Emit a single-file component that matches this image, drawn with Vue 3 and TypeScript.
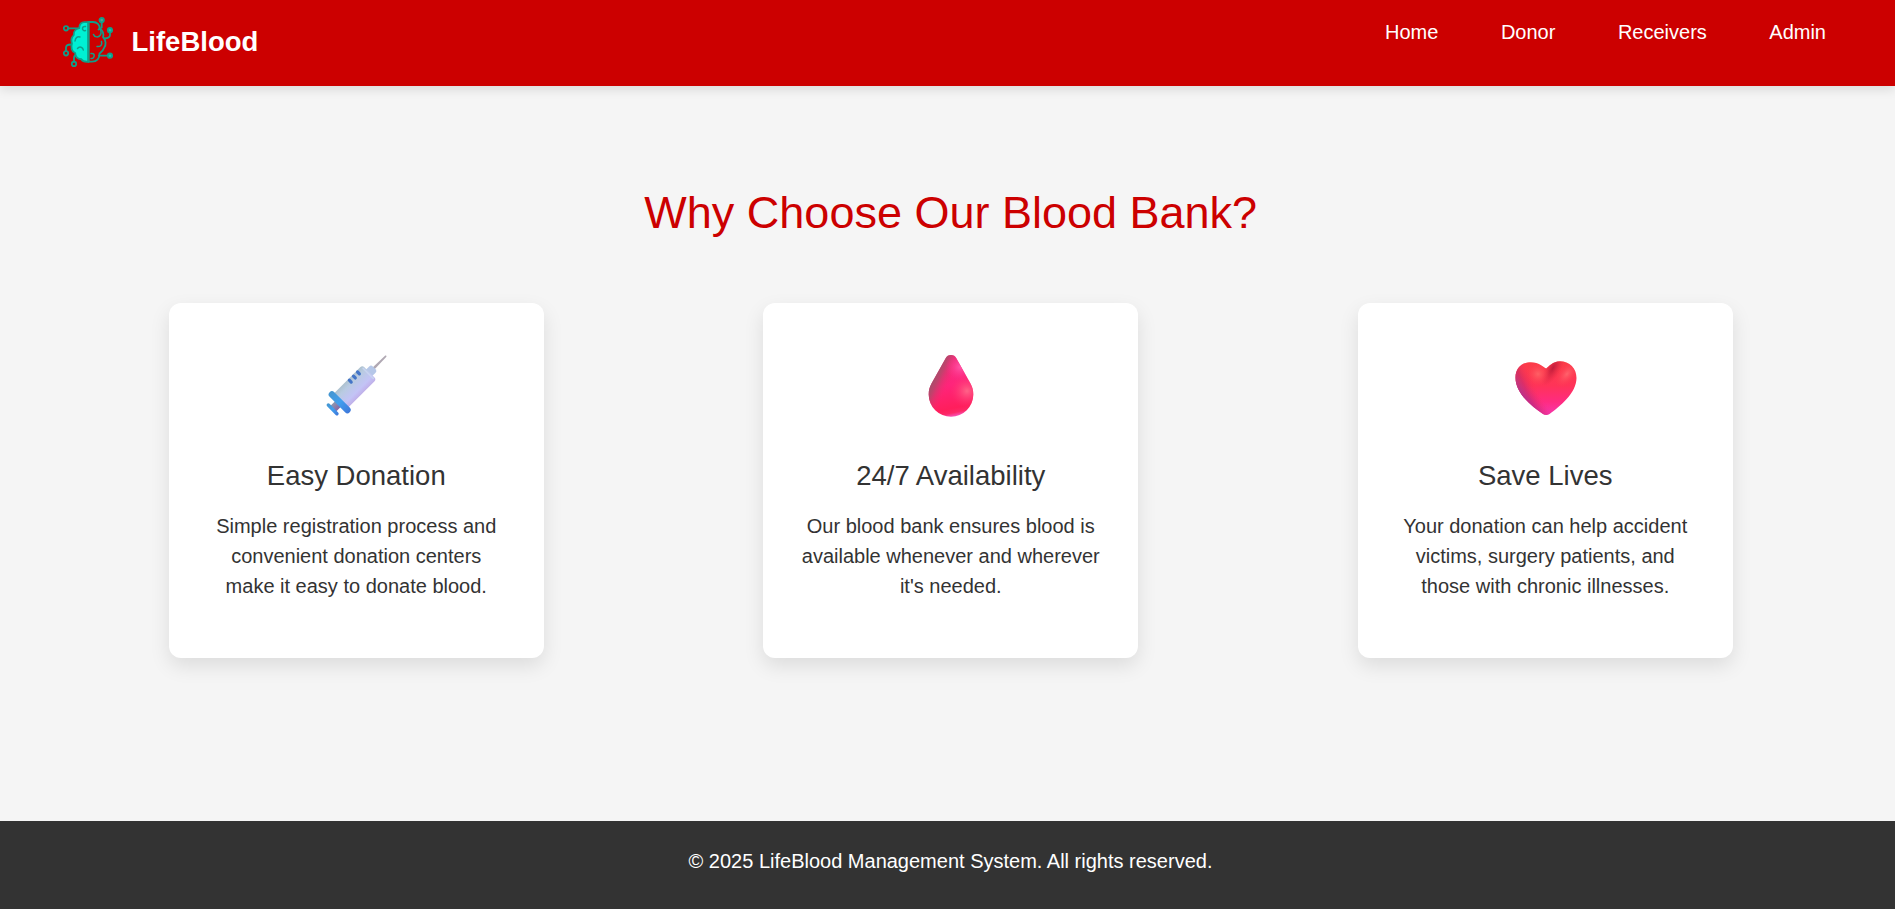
<script setup lang="ts">
interface Feature {
  icon: 'syringe' | 'drop' | 'heart'
  title: string
  lines: string[]
}

const links: string[] = ['Home', 'Donor', 'Receivers', 'Admin']

const features: Feature[] = [
  {
    icon: 'syringe',
    title: 'Easy Donation',
    lines: ['Simple registration process and', 'convenient donation centers', 'make it easy to donate blood.'],
  },
  {
    icon: 'drop',
    title: '24/7 Availability',
    lines: ['Our blood bank ensures blood is', 'available whenever and wherever', "it's needed."],
  },
  {
    icon: 'heart',
    title: 'Save Lives',
    lines: ['Your donation can help accident', 'victims, surgery patients, and', 'those with chronic illnesses.'],
  },
]
</script>

<template>
  <div class="page">
    <header class="header">
      <div class="brand">
        <svg class="logo" viewBox="0 0 50 50" fill="none" stroke="#0f9f8a" stroke-width="1.8" stroke-linecap="round" stroke-linejoin="round">
          <path d="M5 11.300H17M3 34V30.500Q3 27.500 8 27.500M11 45V41Q11 38 14 38M38.700 5V10.500L35.500 12.500M47 15V18Q47 21 41.500 21.500M45 38.700H36" />
          <path fill="#00f0d4" d="M25.300 5.200H22C18.500 4.900 16 7.500 16.300 11.200C13 12 10.300 14.500 10.800 18C8.500 20.500 7.800 23.500 9 26.500C7.500 30.500 8.800 34.500 12.200 36C12.200 40 15 42.500 18 42C19.500 44.300 22 45 25.300 44.700Z" />
          <path d="M25.500 5H30C34 5 37 8 36.500 11.500C40 13 41 17 40 20C43 23 43.500 28 41 31C40 34 38 35 36.500 36.500C36.500 41 34 44.500 29 44.700H25.500" />
          <path d="M25.500 5V44.700" stroke-width="2.200" />
          <path d="M22.500 9.500C18.500 8.500 18.500 14.800 22.500 13.500M12 24C12.500 20.500 14.500 19 17 20M14.500 31.500C16.500 29 20 30 20.300 33M30.500 17.500C31.500 20.500 35.500 20.500 37 18.500M38.500 24.500C39.500 28 37.500 30 34 29.500M28 36.500C32.500 35.500 32 42 28 41.500M36.500 11.500C38.500 14 38.500 16.500 37 18.500" stroke-width="1.500" />
          <circle cx="38.700" cy="3.100" r="2.200" fill="#4fa293" />
          <circle cx="47" cy="13.200" r="2.200" fill="#10c4ad" />
          <circle cx="47" cy="38.700" r="2.200" fill="#10c4ad" />
          <circle cx="3" cy="11.300" r="2.200" />
          <circle cx="3" cy="36.300" r="2.200" />
          <circle cx="11" cy="46.900" r="2.200" />
        </svg>
        <span class="brand-name">LifeBlood</span>
      </div>
      <nav class="nav">
        <a v-for="link in links" :key="link" class="nav-link">{{ link }}</a>
      </nav>
    </header>

    <main class="main">
      <h2 class="title">Why Choose Our Blood Bank?</h2>
      <div class="cards">
        <article v-for="feature in features" :key="feature.title" class="card">
          <svg v-if="feature.icon === 'syringe'" class="icon" viewBox="0 0 64 64">
            <defs>
              <linearGradient id="barrel" x1="0" y1="0" x2="0" y2="1">
                <stop offset="0" stop-color="#adc1ce" />
                <stop offset="0.250" stop-color="#b9cbe2" />
                <stop offset="0.750" stop-color="#c3c3f6" />
                <stop offset="1" stop-color="#c0b0e9" />
              </linearGradient>
              <linearGradient id="flange" x1="0" y1="0" x2="0" y2="1">
                <stop offset="0" stop-color="#4596cf" />
                <stop offset="0.500" stop-color="#429fee" />
                <stop offset="1" stop-color="#3e78da" />
              </linearGradient>
              <linearGradient id="rod" x1="0" y1="0" x2="0" y2="1">
                <stop offset="0" stop-color="#8d97b0" />
                <stop offset="1" stop-color="#8867a5" />
              </linearGradient>
            </defs>
            <g transform="translate(31.500 31.500) rotate(-45)">
              <path d="M23 -1.300L41.500 -0.800Q42.800 0 41.500 0.800L23 1.300Z" fill="#b0a8b3" />
              <rect x="16" y="-4.500" width="9" height="9" rx="2.500" fill="#b5c7e8" />
              <rect x="-25" y="-10.300" width="43.500" height="20" rx="3" fill="url(#barrel)" />
              <path d="M16.800 -7.500V7" stroke="#c8d4f0" stroke-width="1.500" stroke-linecap="round" />
              <path d="M10.300 -8.800V-6.200M4.500 -8.800V-6.200M-1.300 -8.800V-6.200" stroke="#4475c8" stroke-width="3.200" stroke-linecap="round" />
              <rect x="-33.500" y="-4" width="9" height="8" fill="url(#rod)" />
              <rect x="-27" y="-14.300" width="6.600" height="28.400" rx="3.300" fill="url(#flange)" />
              <rect x="-35.500" y="-7.800" width="3.500" height="15.600" rx="1.750" fill="url(#flange)" />
            </g>
          </svg>

          <svg v-else-if="feature.icon === 'drop'" class="icon" viewBox="0 0 64 64">
            <defs>
              <linearGradient id="drop-base" x1="0.300" y1="0" x2="0.450" y2="1">
                <stop offset="0" stop-color="#f02f7c" />
                <stop offset="0.500" stop-color="#ff247b" />
                <stop offset="0.880" stop-color="#ff1e5c" />
                <stop offset="0.950" stop-color="#fc2867" />
                <stop offset="1" stop-color="#fa4bac" />
              </linearGradient>
              <linearGradient id="drop-shade" gradientUnits="userSpaceOnUse" x1="12" y1="26" x2="29" y2="34">
                <stop offset="0" stop-color="#97566a" />
                <stop offset="0.350" stop-color="#b44869" stop-opacity="0.800" />
                <stop offset="1" stop-color="#ff246f" stop-opacity="0" />
              </linearGradient>
              <radialGradient id="drop-glow" gradientUnits="userSpaceOnUse" cx="48" cy="37" r="17">
                <stop offset="0" stop-color="#ff6488" />
                <stop offset="1" stop-color="#ff2e70" stop-opacity="0" />
              </radialGradient>
              <radialGradient id="drop-edge" gradientUnits="userSpaceOnUse" cx="41" cy="13" r="15">
                <stop offset="0" stop-color="#ff55a6" />
                <stop offset="1" stop-color="#ff2b88" stop-opacity="0" />
              </radialGradient>
              <path id="drop-shape" d="M32 1C34.500 1 36.200 2.300 37.200 4L51.500 29.500C53.500 33 54.300 36.500 54.300 40.500A22.300 22.300 0 0 1 9.700 40.500C9.700 36.500 10.500 33 12.500 29.500L26.800 4C27.800 2.300 29.500 1 32 1Z" />
            </defs>
            <use href="#drop-shape" fill="url(#drop-base)" />
            <use href="#drop-shape" fill="url(#drop-shade)" />
            <use href="#drop-shape" fill="url(#drop-edge)" />
            <use href="#drop-shape" fill="url(#drop-glow)" />
          </svg>

          <svg v-else class="icon" viewBox="0 0 64 64">
            <defs>
              <linearGradient id="heart-base" x1="0.500" y1="0" x2="0.500" y2="1">
                <stop offset="0" stop-color="#fb3d47" />
                <stop offset="0.450" stop-color="#ff3358" />
                <stop offset="0.750" stop-color="#ff2b80" />
                <stop offset="1" stop-color="#f538b0" />
              </linearGradient>
              <linearGradient id="heart-shade" gradientUnits="userSpaceOnUse" x1="2" y1="28" x2="17" y2="21">
                <stop offset="0" stop-color="#b5406c" />
                <stop offset="0.350" stop-color="#cd2e62" stop-opacity="0.800" />
                <stop offset="1" stop-color="#ff3355" stop-opacity="0" />
              </linearGradient>
              <linearGradient id="heart-low" gradientUnits="userSpaceOnUse" x1="14" y1="50" x2="25" y2="40">
                <stop offset="0" stop-color="#b626a0" stop-opacity="0.700" />
                <stop offset="1" stop-color="#ff2b80" stop-opacity="0" />
              </linearGradient>
              <radialGradient id="heart-left" gradientUnits="userSpaceOnUse" cx="24" cy="20" r="12">
                <stop offset="0" stop-color="#ff6065" />
                <stop offset="1" stop-color="#ff4050" stop-opacity="0" />
              </radialGradient>
              <radialGradient id="heart-right" gradientUnits="userSpaceOnUse" cx="0" cy="0" r="1" gradientTransform="translate(53 20) rotate(-50) scale(16 9)">
                <stop offset="0" stop-color="#ff636c" />
                <stop offset="1" stop-color="#ff3a50" stop-opacity="0" />
              </radialGradient>
              <radialGradient id="heart-fold" gradientUnits="userSpaceOnUse" cx="0" cy="0" r="1" gradientTransform="translate(39 14) rotate(-60) scale(20 8)">
                <stop offset="0" stop-color="#c11d3c" />
                <stop offset="1" stop-color="#e02745" stop-opacity="0" />
              </radialGradient>
              <path id="heart-shape" d="M32.200 14.500C35 12.500 38.500 7.500 46 7.300C55.500 7.300 62.500 14.500 62.500 24C62.500 39 46 52.500 35.500 60Q32.200 62.200 29 60C18.500 52.500 1.500 40 1.500 23.500C1.500 14.500 7.500 8.200 17 8.200C25 8.200 28.500 12.500 32.200 14.500Z" />
            </defs>
            <use href="#heart-shape" fill="url(#heart-base)" />
            <use href="#heart-shape" fill="url(#heart-fold)" />
            <use href="#heart-shape" fill="url(#heart-left)" />
            <use href="#heart-shape" fill="url(#heart-shade)" />
            <use href="#heart-shape" fill="url(#heart-low)" />
            <use href="#heart-shape" fill="url(#heart-right)" />
          </svg>

          <h3 class="card-title">{{ feature.title }}</h3>
          <p class="card-text">
            <span v-for="line in feature.lines" :key="line" class="card-line">{{ line }}</span>
          </p>
        </article>
      </div>
    </main>

    <footer class="footer">© 2025 LifeBlood Management System. All rights reserved.</footer>
  </div>
</template>

<style>
body {
  margin: 0;
  background: #f5f5f5;
}
</style>

<style scoped>
.page {
  box-sizing: border-box;
  display: flex;
  flex-direction: column;
  height: 909px;
  overflow: hidden;
  font-family: "Liberation Sans", Arial, sans-serif;
  font-size: 20px;
  line-height: 30px;
  color: #333;
}

.header {
  box-sizing: border-box;
  flex: none;
  display: flex;
  justify-content: space-between;
  align-items: flex-start;
  height: 86px;
  padding: 17px 69px 0 63px;
  background: #c00;
  color: #fff;
  box-shadow: 0 4px 10px rgba(0, 0, 0, 0.1);
}

.brand {
  display: flex;
  align-items: center;
  gap: 18.500px;
}

.logo {
  display: block;
  width: 50px;
  height: 50px;
}

.brand-name {
  font-size: 27.500px;
  font-weight: 700;
  line-height: 42px;
}

.nav {
  display: flex;
  gap: 62.500px;
}

.main {
  flex: none;
  box-sizing: border-box;
  height: 735px;
  padding: 93px 52.500px 0 59px;
}

.title {
  margin: 0 0 56px;
  font-size: 45px;
  font-weight: 400;
  line-height: 68px;
  text-align: center;
  color: #c00;
}

.cards {
  display: flex;
  justify-content: space-around;
}

.card {
  box-sizing: border-box;
  display: flex;
  flex-direction: column;
  align-items: center;
  width: 375px;
  height: 355px;
  padding-top: 51px;
  border-radius: 12px;
  background: #fff;
  text-align: center;
  box-shadow: 0 8px 20px rgba(0, 0, 0, 0.1);
}

.icon {
  display: block;
  width: 64px;
  height: 64px;
  margin-left: 1px;
}

.card-title {
  margin: 37px 0 14px;
  font-size: 27.500px;
  font-weight: 400;
  line-height: 42px;
}

.card-text {
  margin: 0;
}

.card-line {
  display: block;
}

.footer {
  box-sizing: border-box;
  flex: 1;
  padding: 25px 0 0 6px;
  background: #333;
  color: #fff;
  text-align: center;
}
</style>
